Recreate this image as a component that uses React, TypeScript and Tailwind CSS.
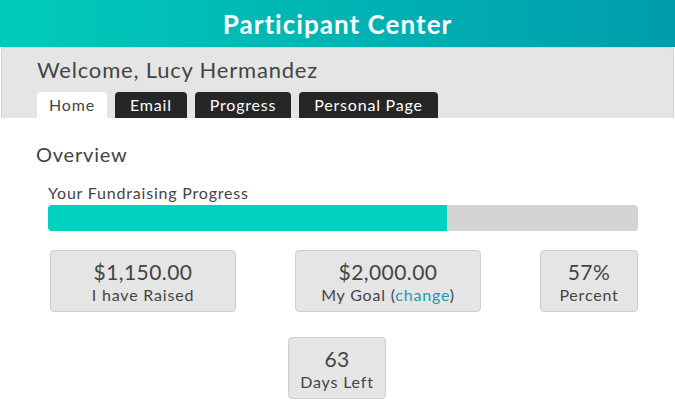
import React from 'react';

const stats = [
  { value: '$1,150.00', label: 'I have Raised', width: 'w-[186px]' },
  { value: '$2,000.00', label: 'My Goal', width: 'w-[186px]', change: true },
  { value: '57%', label: 'Percent', width: 'w-[98px]' },
];

const tabs = ['Email', 'Progress', 'Personal Page'];

const StatCard = ({ value, label, width, change }: { value: string; label: string; width: string; change?: boolean }) => (
  <div className={`${width} h-[62px] flex flex-col items-center justify-center rounded bg-[#e5e5e5] border border-[#cfcfcf] text-[#444] pt-[2px]`}>
    <div className="text-[21px] leading-[24px] tracking-[0.02em]">{value}</div>
    <div className="text-[16px] leading-[21px]">
      {label}
      {change && (
        <>
          {' '}(<span className="text-[#1a9bb0]">change</span>)
        </>
      )}
    </div>
  </div>
);

const App = () => {
  return (
    <div className="w-[675px] h-[420px] bg-white overflow-hidden font-['Lato',sans-serif] tracking-[0.05em]">
      <div className="h-[47px] bg-gradient-to-r from-[#00cbbb] to-[#009dac] flex items-center justify-center">
        <h1 className="text-white font-bold text-[26px] leading-none tracking-[0.04em]">Participant Center</h1>
      </div>

      <div className="mx-[1px] h-[71px] bg-[#e5e5e5] border border-b-0 border-[#d3d3d3] rounded-t flex flex-col justify-end px-[35px]">
        <div className="text-[22px] text-[#444] leading-none mb-[11px]">Welcome, Lucy Hermandez</div>
        <div className="flex gap-[8px]">
          <div className="w-[70px] h-[26px] bg-white rounded-t flex items-center justify-center text-[16px] text-[#444]">Home</div>
          {tabs.map(t => (
            <div key={t} className="h-[26px] px-[15px] bg-[#262626] rounded-t flex items-center justify-center text-[16px] text-white">
              {t}
            </div>
          ))}
        </div>
      </div>

      <div className="px-[36px] pt-[26px]">
        <h2 className="text-[20px] text-[#444] leading-none">Overview</h2>
      </div>

      <div className="pl-[48px] pr-[37px] pt-[21px]">
        <div className="text-[16px] text-[#444] leading-none mb-[4px]">Your Fundraising Progress</div>
        <div className="h-[26px] bg-[#d4d4d4] rounded overflow-hidden">
          <div className="h-full w-[399px] bg-[#00d1c1]" />
        </div>
      </div>

      <div className="flex pl-[50px] gap-[59px] mt-[19px]">
        {stats.map(s => (
          <StatCard key={s.value} {...s} />
        ))}
      </div>

      <div className="flex justify-center mt-[25px] pr-[1px]">
        <StatCard value="63" label="Days Left" width="w-[98px]" />
      </div>
    </div>
  );
};

export default App;
